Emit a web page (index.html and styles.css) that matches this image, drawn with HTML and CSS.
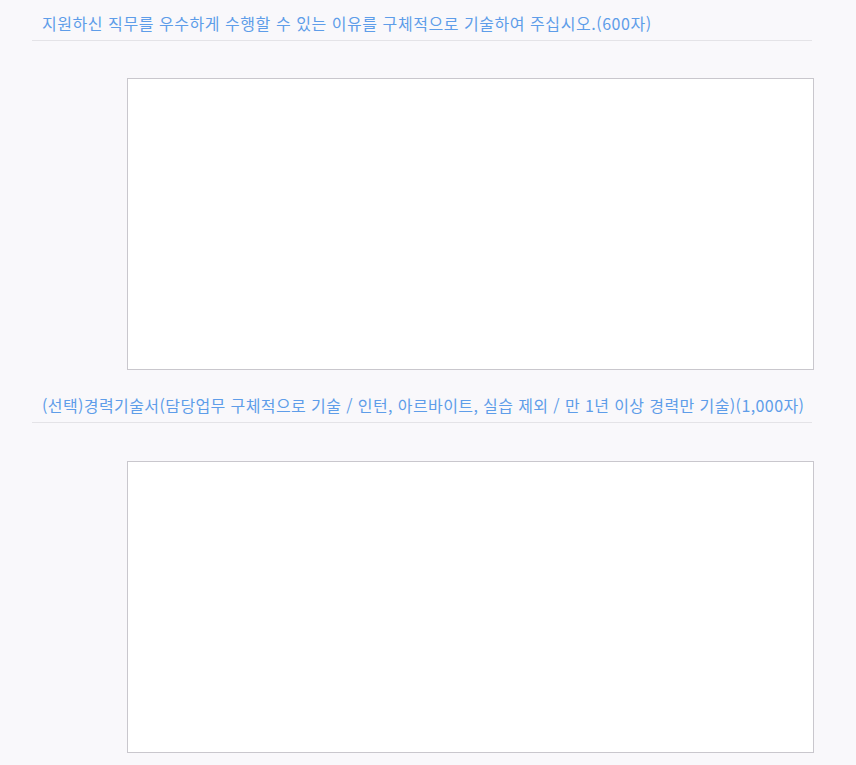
FILE: index.html
```html
<!DOCTYPE html>
<html lang="ko">
<head>
<meta charset="utf-8">
<title>자기소개서</title>
<link rel="stylesheet" href="styles.css">
</head>
<body>
<div class="form">
  <section class="item item-first">
    <h3 class="item-title">지원하신 직무를 우수하게 수행할 수 있는 이유를 구체적으로 기술하여 주십시오.(600자)</h3>
    <div class="item-body">
      <textarea class="answer"></textarea>
    </div>
  </section>
  <section class="item item-second">
    <h3 class="item-title">(선택)경력기술서(담당업무 구체적으로 기술 / 인턴, 아르바이트, 실습 제외 / 만 1년 이상 경력만 기술)(1,000자)</h3>
    <div class="item-body">
      <textarea class="answer"></textarea>
    </div>
  </section>
</div>
</body>
</html>
```
FILE: styles.css
```css
html, body {
  margin: 0;
  padding: 0;
  background: #f9f8fb;
}
body {
  font-family: "Noto Sans CJK KR", "Noto Sans", sans-serif;
  width: 856px;
  height: 765px;
  overflow: hidden;
}
.form {
  display: flex;
  flex-direction: column;
}
.item-title {
  margin: 18px 0 0 32px;
  width: 770px;
  padding: 0 0 0 10px;
  font-size: 16px;
  letter-spacing: 0.4px;
  font-weight: 400;
  line-height: 34px;
  color: #5e9de9;
  border-bottom: 1px solid #e4e3e7;
  white-space: nowrap;
}
.item-first .item-title {
  margin-top: 6px;
  letter-spacing: 0.55px;
}
.item-body {
  padding: 37px 0 0 127px;
  display: flex;
}
.item-second .item-body {
  padding-top: 38px;
}
.answer {
  box-sizing: border-box;
  width: 687px;
  height: 292px;
  margin: 0;
  border: 1px solid #c9c7cd;
  background: #ffffff;
  resize: none;
  display: block;
}
```
